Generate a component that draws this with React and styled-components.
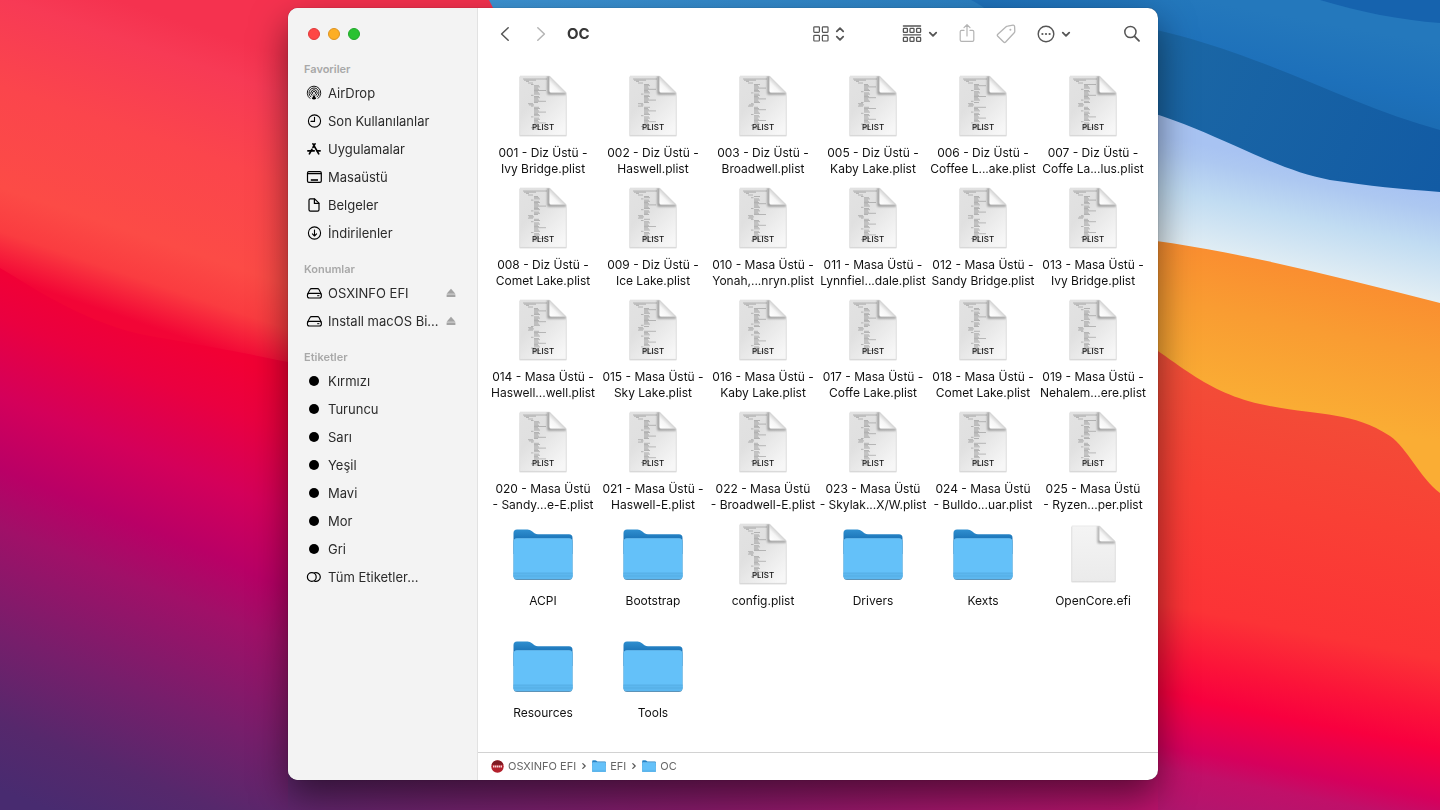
import styled, { createGlobalStyle } from "styled-components";

const GlobalStyle = createGlobalStyle`
  * {
    box-sizing: border-box;
  }

  body {
    margin: 0;
    font-family: Inter, "Liberation Sans", sans-serif;
    color: #2b2b2b;
    background: #7a1c6c;
  }

  button {
    appearance: none;
    border: 0;
    padding: 0;
    background: none;
    color: inherit;
    font: inherit;
  }

  a {
    color: inherit;
    text-decoration: none;
  }

  ul, ol {
    list-style: none;
    margin: 0;
    padding: 0;
  }

  svg {
    display: block;
    flex: none;
  }
`;

const Desktop = styled.div`
  min-height: 100vh;
  padding: 8px 8px 30px 20%;
  display: flex;
`;

const Backdrop = styled.svg`
  position: fixed;
  inset: 0;
  width: 100%;
  height: 100%;
  z-index: -1;
`;

const Window = styled.main`
  flex: 1;
  max-width: 870px;
  display: flex;
  border-radius: 10px;
  overflow: hidden;
  background: #fff;
  box-shadow: 0 0 1px rgba(0, 0, 0, 0.6), 0 16px 36px rgba(0, 0, 0, 0.5);
`;

const Sidebar = styled.nav`
  flex: none;
  width: 190px;
  background: #f3f3f3;
  border-right: 1px solid #e2e2e2;
`;

const Lights = styled.div`
  height: 52px;
  padding-left: 20px;
  display: flex;
  align-items: center;
  gap: 8px;
`;

const Light = styled.button`
  width: 12px;
  height: 12px;
  border-radius: 50%;
  background: ${({ $color }) => $color};
  border: 1px solid ${({ $edge }) => $edge};
`;

const Section = styled.section`
  margin-bottom: 13px;
`;

const SectionTitle = styled.h2`
  margin: 0;
  padding-left: 16px;
  font-size: 11px;
  line-height: 19px;
  font-weight: 600;
  color: #a8a8a8;
`;

const SideItem = styled.li`
  height: 28px;
  padding: 0 21px 0 18px;
  display: flex;
  align-items: center;
  justify-content: space-between;
`;

const SideLink = styled.a`
  display: flex;
  align-items: center;
  gap: 6px;
  font-size: 13px;
  line-height: 16px;
  white-space: nowrap;

  svg {
    color: #000;
  }
`;

const Eject = styled.button`
  color: #a3a3a3;
`;

const Pane = styled.div`
  flex: 1;
  min-width: 0;
  display: flex;
  flex-direction: column;
`;

const Toolbar = styled.header`
  height: 52px;
  padding: 0 17px 0 22px;
  display: flex;
  align-items: center;
  gap: 21px;
`;

const History = styled.div`
  display: flex;
  gap: 26px;
`;

const Title = styled.h1`
  margin: 0 auto 0 0;
  font-size: 15px;
  line-height: 20px;
  font-weight: 700;
  color: #383838;
`;

const Tool = styled.button`
  display: flex;
  align-items: center;
  gap: 6px;
  margin-right: ${({ $space }) => $space || 0}px;
  color: ${({ $dim }) => ($dim ? "#b4b4b4" : "#555")};
`;

const Files = styled.ul`
  flex: 1;
  padding: 15px 10px 0;
  display: grid;
  grid-template-columns: repeat(auto-fill, 110px);
  grid-auto-rows: 112px;
`;

const File = styled.li`
  display: flex;
  flex-direction: column;
  align-items: center;
  gap: 8px;
`;

const Preview = styled.div`
  height: 62px;
  display: flex;
  align-items: center;
`;

const FileName = styled.span`
  font-size: 12px;
  line-height: 16px;
  color: #111;
  text-align: center;
  white-space: pre;
`;

const PathBar = styled.footer`
  height: 28px;
  padding: 0 0 1px 13px;
  border-top: 1px solid #d2d2d2;
`;

const PathList = styled.ol`
  height: 100%;
  display: flex;
  align-items: center;
  gap: 6px;
`;

const PathItem = styled.li`
  display: flex;
  align-items: center;
  gap: 6px;
`;

const PathLink = styled.a`
  display: flex;
  align-items: center;
  gap: 4px;
  font-size: 11px;
  line-height: 16px;
  color: #666;
`;

function Wallpaper() {
  return (
    <Backdrop viewBox="0 0 1440 810" preserveAspectRatio="xMidYMid slice" aria-hidden="true">
      <defs>
        <linearGradient id="purple" gradientUnits="userSpaceOnUse" x1="0" y1="265" x2="-181" y2="718">
          <stop offset="0" stopColor="#f20034" />
          <stop offset=".1" stopColor="#ea0040" />
          <stop offset=".25" stopColor="#d4005a" />
          <stop offset=".39" stopColor="#b90066" />
          <stop offset=".5" stopColor="#a01068" />
          <stop offset=".7" stopColor="#771e6b" />
          <stop offset=".87" stopColor="#56286c" />
          <stop offset="1" stopColor="#482b70" />
        </linearGradient>
        <linearGradient id="coral" gradientUnits="userSpaceOnUse" x1="0" y1="-40" x2="-96" y2="243">
          <stop offset="0" stopColor="#f5324f" />
          <stop offset=".12" stopColor="#f73a55" />
          <stop offset=".4" stopColor="#fb454c" />
          <stop offset=".72" stopColor="#fc4b46" />
          <stop offset=".86" stopColor="#fa3c40" />
          <stop offset="1" stopColor="#f20536" />
        </linearGradient>
        <linearGradient id="strip" x1="0" x2="1" y1="0" y2="0">
          <stop offset="0" stopColor="#5f266c" />
          <stop offset=".5" stopColor="#8a1a6a" />
          <stop offset="1" stopColor="#bc136c" />
        </linearGradient>
        <linearGradient id="sky" gradientUnits="userSpaceOnUse" x1="490" y1="0" x2="1200" y2="30">
          <stop offset="0" stopColor="#3d93d3" />
          <stop offset=".65" stopColor="#2c82c4" />
          <stop offset="1" stopColor="#2076b8" />
        </linearGradient>
        <linearGradient id="sky2" gradientUnits="userSpaceOnUse" x1="1200" y1="0" x2="1180" y2="110">
          <stop offset="0" stopColor="#2478bc" />
          <stop offset=".5" stopColor="#1d70ba" />
          <stop offset="1" stopColor="#1a69ad" />
        </linearGradient>
        <linearGradient id="deep" gradientUnits="userSpaceOnUse" x1="1158" y1="60" x2="1440" y2="190">
          <stop offset="0" stopColor="#1b67a5" />
          <stop offset="1" stopColor="#125ba4" />
        </linearGradient>
        <linearGradient id="ice" gradientUnits="userSpaceOnUse" x1="1300" y1="165" x2="1278" y2="268">
          <stop offset="0" stopColor="#a8c3f2" />
          <stop offset=".15" stopColor="#adc8f1" />
          <stop offset=".5" stopColor="#c1dcf2" />
          <stop offset="1" stopColor="#e2eef4" />
        </linearGradient>
        <linearGradient id="amber" gradientUnits="userSpaceOnUse" x1="1310" y1="270" x2="1280" y2="410">
          <stop offset="0" stopColor="#fa8e30" />
          <stop offset=".4" stopColor="#f99c32" />
          <stop offset="1" stopColor="#faad34" />
        </linearGradient>
        <linearGradient id="flame" gradientUnits="userSpaceOnUse" x1="1158" y1="340" x2="1068" y2="792">
          <stop offset="0" stopColor="#f05038" />
          <stop offset=".3" stopColor="#f94035" />
          <stop offset=".56" stopColor="#fc3336" />
          <stop offset=".67" stopColor="#fb1439" />
          <stop offset=".75" stopColor="#f8003f" />
          <stop offset=".86" stopColor="#d6005c" />
          <stop offset=".91" stopColor="#c01069" />
          <stop offset="1" stopColor="#b0166e" />
        </linearGradient>
      </defs>
      <rect width="720" height="810" fill="url(#purple)" />
      <path d="M0 0H720V420C520 400 400 378 288 362C240 352 180 341 150 336C90 325 40 292 0 268Z" fill="url(#coral)" />
      <rect x="288" y="700" width="870" height="110" fill="url(#strip)" />
      <path d="M489 0H1440V240H600C540 120 510 40 489 0Z" fill="url(#sky)" />
      <path d="M971 0H1440V180H1100C1060 80 1010 20 971 0Z" fill="url(#sky2)" />
      <path d="M1320 0C1360 12 1400 20 1440 23V0Z" fill="#1663ae" />
      <path d="M1100 20C1240 38 1330 100 1440 130V220H1100Z" fill="url(#deep)" />
      <path d="M1100 100C1200 118 1260 167 1330 180C1370 186 1400 189 1440 192V330H1100Z" fill="url(#ice)" />
      <path d="M1100 234C1220 246 1330 275 1440 303V520H1100Z" fill="url(#amber)" />
      <path d="M1100 312C1180 362 1200 390 1260 404C1320 417 1350 410 1390 436C1408 449 1420 478 1440 493V810H1158V400Z" fill="url(#flame)" />
    </Backdrop>
  );
}

const stroke = {
  fill: "none",
  stroke: "currentColor",
  strokeLinecap: "round",
  strokeLinejoin: "round",
};

const sideIcons = {
  airdrop: (
    <g strokeWidth=".9">
      <path d="M3.9 13.4A6.8 6.8 0 1 1 12.1 13.400" />
      <path d="M4.900 11.900A5 5 0 1 1 11.100 11.900" />
      <path d="M5.900 10.400A3.200 3.200 0 1 1 10.100 10.400" />
      <path d="M6.900 9.200A1.600 1.600 0 1 1 9.100 9.200" />
      <path d="M8 9.400L10.200 13.800Q8 15 5.800 13.800Z" fill="currentColor" stroke="none" />
    </g>
  ),
  recents: (
    <g strokeWidth="1.1">
      <circle cx="8.500" cy="8" r="6.100" />
      <path d="M8.500 4.200V8.400H5" />
    </g>
  ),
  apps: (
    <g strokeWidth="1.7">
      <path d="M7 2.8L12.7 12.8M9 2.8L7 6.4M5.9 8.3L3.4 12.8" />
      <path d="M1.9 9.8H8.2M11.2 9.8H14.1" />
    </g>
  ),
  desktop: (
    <g strokeWidth="1.200">
      <rect x="1.500" y="2.600" width="13.800" height="10.800" rx="1.400" />
      <path d="M1.700 4.600H15" />
      <path d="M4.800 11H12" strokeWidth="1.600" strokeLinecap="butt" />
    </g>
  ),
  documents: (
    <g strokeWidth="1.2">
      <path d="M4.4 1.8H8.6L13 6.2V12.8Q13 14.2 11.6 14.2H4.4Q3 14.2 3 12.8V3.2Q3 1.8 4.4 1.8Z" />
      <path d="M8.4 2V6.4H12.8" />
    </g>
  ),
  downloads: (
    <g strokeWidth="1.1">
      <circle cx="8.500" cy="8" r="6.100" />
      <path d="M8.500 5V10.800M6.400 8.800L8.500 11L10.600 8.800" />
    </g>
  ),
  disk: (
    <g strokeWidth="1.1">
      <path d="M1.600 9L4 4.600Q4.500 3.600 5.500 3.600H11.500Q12.500 3.600 13 4.600L15.200 9" />
      <rect x="1.400" y="8.400" width="14" height="4.600" rx="2" />
      <path d="M11.600 10.700H13" strokeWidth="1" />
    </g>
  ),
  tag: <circle cx="8" cy="8" r="5" fill="currentColor" stroke="none" />,
  allTags: (
    <g strokeWidth="1.2">
      <circle cx="5.8" cy="8" r="4.4" />
      <path d="M8.6 3.8A4.4 4.4 0 1 1 8.6 12.2" />
    </g>
  ),
};

function SideIcon({ name }) {
  return (
    <svg width="16" height="16" viewBox="0 0 16 16" {...stroke}>
      {sideIcons[name]}
    </svg>
  );
}

const Chevron = () => (
  <svg width="10" height="16" viewBox="0 0 10 16" {...stroke} strokeWidth="1.8">
    <path d="M1.8 6.6L5 9.8L8.2 6.6" />
  </svg>
);

function FolderIcon({ width = 60, height = 52 }) {
  return (
    <svg width={width} height={height} viewBox="0 0 60 52">
      <defs>
        <linearGradient id="folderBack" x1="0" y1="0" x2="0" y2="1">
          <stop offset="0" stopColor="#2f8fd0" />
          <stop offset=".4" stopColor="#1b74b8" />
        </linearGradient>
      </defs>
      <path d="M.5 5Q.5 1.500 4 1.500H14.500Q17 1.500 19 3.200L21.500 5.200Q23 6.300 25 6.300H56Q59.500 6.300 59.500 10V26H.5Z" fill="url(#folderBack)" />
      <path d="M.5 14Q.5 10.200 4 10.200H56Q59.500 10.200 59.500 14V48Q59.500 52 56 52H4Q.5 52 .5 48Z" fill="#5c93b8" />
      <path d="M.5 14Q.5 10.200 4 10.200H56Q59.500 10.200 59.500 14V47.400Q59.500 51 56 51H4Q.5 51 .5 47.400Z" fill="#64c1f9" />
      <path d="M.5 45H59.500V47.400Q59.500 51 56 51H4Q.5 51 .5 47.400Z" fill="#5cb7ef" />
      <path d="M.5 45H59.500M.5 48H59.500" stroke="#51a9e0" strokeWidth=".7" />
    </svg>
  );
}

// [x, y, width] of each line in the miniature listing
const header = [[4, 4, 24], [5, 5.2, 12], [7, 6.400, 3], [9, 8, 5]];

function listing(seed) {
  const lines = [...header];
  for (let i = 0; i < 38; i += 1) {
    const y = 9.5 + i * 1.200;
    const k = (i + seed) % 9;
    if (k === 0) {
      lines.push([12, y, 2.5]);
    } else if (i > 15 && i < 19) {
      lines.push([9 + (i % 2), y, 5]);
    } else {
      lines.push([15, y, k === 5 ? 12 : 4 + (k % 3)]);
    }
  }
  return lines.map(([x, y, w]) => `M${x} ${y.toFixed(1)}h${w}`).join("");
}

function PageIcon({ seed, label, width = 48, height = 62 }) {
  return (
    <svg width={width} height={height} viewBox="0 0 48 62">
      <defs>
        <linearGradient id="page" x1="0" y1="0" x2=".8" y2="1">
          <stop offset="0" stopColor="#e2e2e2" />
          <stop offset=".4" stopColor="#e0e0e0" />
          <stop offset="1" stopColor="#f7f7f7" />
        </linearGradient>
        <linearGradient id="blank" x1="0" y1="0" x2="0" y2="1">
          <stop offset="0" stopColor="#f4f4f4" />
          <stop offset="1" stopColor="#ebebeb" />
        </linearGradient>
        <linearGradient id="fold" gradientUnits="userSpaceOnUse" x1="31" y1="17" x2="39" y2="9">
          <stop offset="0" stopColor="#ffffff" />
          <stop offset=".6" stopColor="#f6f6f6" />
          <stop offset="1" stopColor="#d0d0d0" />
        </linearGradient>
        <filter id="soft" x="-20%" y="-20%" width="140%" height="140%">
          <feGaussianBlur stdDeviation="1" />
        </filter>
        <clipPath id="sheet">
          <path d="M1 1H30.500L47 17.500V60H1Z" />
        </clipPath>
      </defs>
      <path d="M.6 2H30.500L47.400 18V61.300H.6Z" fill="#c2c2c2" />
      <path d="M1 1H30.500L47 17.500V60.300H1Z" fill={label ? "url(#page)" : "url(#blank)"} stroke="#e2e2e2" strokeWidth=".7" />
      {label && <path d={listing(seed)} stroke="#666" strokeWidth=".55" opacity=".7" />}
      <g clipPath="url(#sheet)">
        <path d="M29.500 1V18.500H47" fill="none" stroke="#000" strokeWidth="2" opacity=".4" filter="url(#soft)" />
      </g>
      <path d="M30.500 1L47 17.500H32Q30.500 17.500 30.500 16Z" fill="url(#fold)" />
      {label && (
        <text x="24" y="55" textAnchor="middle" fontSize="8" fontWeight="500" fill="#111">
          {label}
        </text>
      )}
    </svg>
  );
}

const DiskBadge = () => (
  <svg width="13" height="13" viewBox="0 0 13 13">
    <circle cx="6.500" cy="6.500" r="6.200" fill="#b3202c" />
    <path d="M.6 4.800A6.200 6.200 0 0 1 12.400 4.800Z" fill="#7e1a22" />
    <path d="M2 6.500H11" stroke="#f3d6d8" strokeWidth="1.800" strokeDasharray="1.4 .5" />
  </svg>
);

const PathArrow = () => (
  <svg width="4" height="8" viewBox="0 0 4 8" {...stroke} strokeWidth="1.200" color="#555">
    <path d="M.8 1.600L3.200 4L.8 6.400" />
  </svg>
);

const sections = [
  {
    title: "Favoriler",
    items: [
      ["airdrop", "AirDrop"],
      ["recents", "Son Kullanılanlar"],
      ["apps", "Uygulamalar"],
      ["desktop", "Masaüstü"],
      ["documents", "Belgeler"],
      ["downloads", "İndirilenler"],
    ],
  },
  {
    title: "Konumlar",
    items: [
      ["disk", "OSXINFO EFI"],
      ["disk", "Install macOS Bi..."],
    ],
  },
  {
    title: "Etiketler",
    items: [
      ["tag", "Kırmızı"],
      ["tag", "Turuncu"],
      ["tag", "Sarı"],
      ["tag", "Yeşil"],
      ["tag", "Mavi"],
      ["tag", "Mor"],
      ["tag", "Gri"],
      ["allTags", "Tüm Etiketler..."],
    ],
  },
];

const files = [
  "001 - Diz Üstü -\nIvy Bridge.plist",
  "002 - Diz Üstü -\nHaswell.plist",
  "003 - Diz Üstü -\nBroadwell.plist",
  "005 - Diz Üstü -\nKaby Lake.plist",
  "006 - Diz Üstü -\nCoffee L...ake.plist",
  "007 - Diz Üstü -\nCoffe La...lus.plist",
  "008 - Diz Üstü -\nComet Lake.plist",
  "009 - Diz Üstü -\nIce Lake.plist",
  "010 - Masa Üstü -\nYonah,...nryn.plist",
  "011 - Masa Üstü -\nLynnfiel...dale.plist",
  "012 - Masa Üstü -\nSandy Bridge.plist",
  "013 - Masa Üstü -\nIvy Bridge.plist",
  "014 - Masa Üstü -\nHaswell...well.plist",
  "015 - Masa Üstü -\nSky Lake.plist",
  "016 - Masa Üstü -\nKaby Lake.plist",
  "017 - Masa Üstü -\nCoffe Lake.plist",
  "018 - Masa Üstü -\nComet Lake.plist",
  "019 - Masa Üstü -\nNehalem...ere.plist",
  "020 - Masa Üstü\n- Sandy...e-E.plist",
  "021 - Masa Üstü -\nHaswell-E.plist",
  "022 - Masa Üstü\n- Broadwell-E.plist",
  "023 - Masa Üstü\n- Skylak...X/W.plist",
  "024 - Masa Üstü\n- Bulldo...uar.plist",
  "025 - Masa Üstü\n- Ryzen...per.plist",
  "ACPI",
  "Bootstrap",
  "config.plist",
  "Drivers",
  "Kexts",
  "OpenCore.efi",
  "Resources",
  "Tools",
];

function FilePreview({ name, index }) {
  if (name.endsWith(".plist")) {
    return <PageIcon seed={index} label="PLIST" />;
  }
  if (name.endsWith(".efi")) {
    return <PageIcon width={45} height={58} />;
  }
  return <FolderIcon />;
}

function App() {
  return (
    <>
      <GlobalStyle />
      <Wallpaper />
      <Desktop>
        <Window>
          <Sidebar>
            <Lights>
              <Light $color="#fe4644" $edge="#e0383a" aria-label="Kapat" />
              <Light $color="#fdae24" $edge="#de9320" aria-label="Küçült" />
              <Light $color="#29c231" $edge="#20a829" aria-label="Büyüt" />
            </Lights>
            {sections.map(({ title, items }) => (
              <Section key={title}>
                <SectionTitle>{title}</SectionTitle>
                <ul>
                  {items.map(([icon, name]) => (
                    <SideItem key={name}>
                      <SideLink href="#">
                        <SideIcon name={icon} />
                        {name}
                      </SideLink>
                      {icon === "disk" && (
                        <Eject aria-label="Çıkar">
                          <svg width="10" height="10" viewBox="0 0 10 10" fill="currentColor">
                            <path d="M5 .8L9.400 5.800H.6Z" />
                            <rect x=".6" y="6.400" width="8.800" height="2.600" />
                          </svg>
                        </Eject>
                      )}
                    </SideItem>
                  ))}
                </ul>
              </Section>
            ))}
          </Sidebar>

          <Pane>
            <Toolbar>
              <History>
                <Tool aria-label="Geri">
                  <svg width="10" height="16" viewBox="0 0 10 16" {...stroke} strokeWidth="1.500">
                    <path d="M8.200 1.800L1.600 8L8.200 14.200" />
                  </svg>
                </Tool>
                <Tool aria-label="İleri" $dim>
                  <svg width="10" height="16" viewBox="0 0 10 16" {...stroke} strokeWidth="1.500">
                    <path d="M1.800 1.800L8.400 8L1.800 14.200" />
                  </svg>
                </Tool>
              </History>
              <Title>OC</Title>
              <Tool aria-label="Görünüm" $space={36}>
                <svg width="16" height="16" viewBox="0 0 16 16" {...stroke} strokeWidth="1.2">
                  <rect x=".8" y=".8" width="5.600" height="5.600" rx=".8" />
                  <rect x="9.400" y=".8" width="5.600" height="5.600" rx=".8" />
                  <rect x=".8" y="9.400" width="5.600" height="5.600" rx=".8" />
                  <rect x="9.400" y="9.400" width="5.600" height="5.600" rx=".8" />
                </svg>
                <svg width="10" height="16" viewBox="0 0 10 16" {...stroke} strokeWidth="1.8">
                  <path d="M1.800 5.400L5 2.200L8.200 5.400M1.800 10.600L5 13.800L8.200 10.600" />
                </svg>
              </Tool>
              <Tool aria-label="Grupla">
                <svg width="20" height="18" viewBox="0 0 20 18" {...stroke} strokeWidth="1.300">
                  <path d="M1.400 1H18.600M1.400 9.800H18.600" />
                  <rect x="1.400" y="3.400" width="4" height="4" rx=".6" />
                  <rect x="8" y="3.400" width="4" height="4" rx=".6" />
                  <rect x="14.600" y="3.400" width="4" height="4" rx=".6" />
                  <rect x="1.400" y="12.400" width="4" height="4" rx=".6" />
                  <rect x="8" y="12.400" width="4" height="4" rx=".6" />
                  <rect x="14.600" y="12.400" width="4" height="4" rx=".6" />
                </svg>
                <Chevron />
              </Tool>
              <Tool aria-label="Paylaş" $dim>
                <svg width="16" height="20" viewBox="0 0 16 20" {...stroke} strokeWidth="1.2">
                  <path d="M5 6.400H2.600Q1.200 6.400 1.200 7.800V16Q1.200 17.400 2.600 17.400H13.400Q14.800 17.400 14.800 16V7.800Q14.800 6.400 13.400 6.400H11" />
                  <path d="M8 12V.8M5 3.600L8 .7L11 3.600" />
                </svg>
              </Tool>
              <Tool aria-label="Etiketle" $dim>
                <svg width="20" height="20" viewBox="0 0 20 20" {...stroke} strokeWidth="1.3">
                  <path d="M11.600 2.200L17 1.200Q18.400 1 18.600 2.600L18.800 7.200Q18.800 8.200 18 9L9.600 18Q8.600 19 7.600 18L1.800 12.200Q.8 11.200 1.800 10.200L9.800 3Q10.600 2.300 11.600 2.200Z" />
                  <circle cx="14.400" cy="5.800" r="1" fill="currentColor" stroke="none" />
                </svg>
              </Tool>
              <Tool aria-label="İşlemler" $space={31}>
                <svg width="18" height="18" viewBox="0 0 18 18" {...stroke} strokeWidth="1.4">
                  <circle cx="9" cy="9" r="7.800" />
                  <g fill="currentColor" stroke="none">
                    <circle cx="5.400" cy="9" r="1.100" />
                    <circle cx="9" cy="9" r="1.100" />
                    <circle cx="12.600" cy="9" r="1.100" />
                  </g>
                </svg>
                <Chevron />
              </Tool>
              <Tool aria-label="Ara">
                <svg width="18" height="18" viewBox="0 0 18 18" {...stroke} strokeWidth="1.500">
                  <circle cx="7.400" cy="7" r="5.600" />
                  <path d="M11.600 11.400L16 15.800" strokeWidth="1.900" />
                </svg>
              </Tool>
            </Toolbar>

            <Files>
              {files.map((name, index) => (
                <File key={name}>
                  <Preview>
                    <FilePreview name={name} index={index} />
                  </Preview>
                  <FileName>{name}</FileName>
                </File>
              ))}
            </Files>

            <PathBar>
              <PathList>
                <PathItem>
                  <PathLink href="#">
                    <DiskBadge />
                    OSXINFO EFI
                  </PathLink>
                  <PathArrow />
                </PathItem>
                <PathItem>
                  <PathLink href="#">
                    <FolderIcon width={14} height={12} />
                    EFI
                  </PathLink>
                  <PathArrow />
                </PathItem>
                <PathItem>
                  <PathLink href="#">
                    <FolderIcon width={14} height={12} />
                    OC
                  </PathLink>
                </PathItem>
              </PathList>
            </PathBar>
          </Pane>
        </Window>
      </Desktop>
    </>
  );
}

export default App;
